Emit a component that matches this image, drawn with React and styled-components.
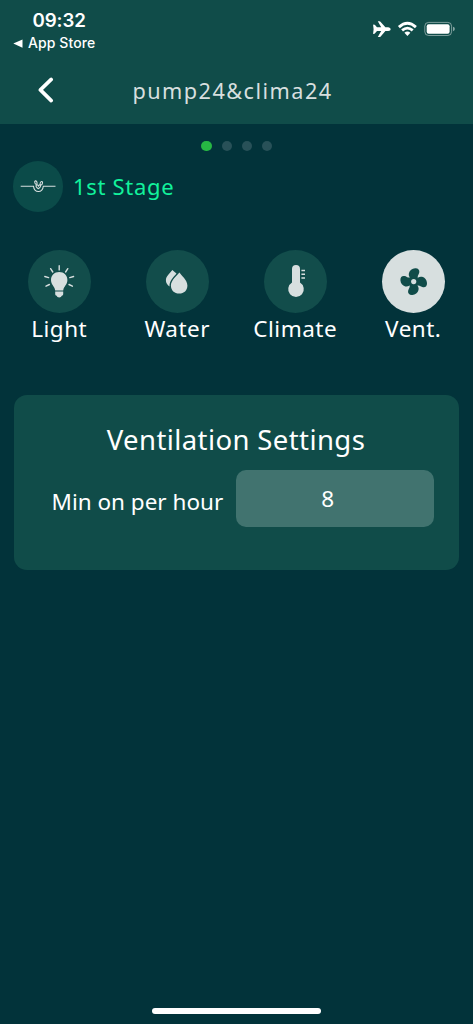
import React, { useState } from 'react';
import styled, { createGlobalStyle, ThemeProvider } from 'styled-components';

const theme = {
    colors: {
        background: '#02333a',
        surface: '#104c49',
        field: '#41736f',
        icon: '#d7dfdf',
        mint: '#12f29c',
        green: '#27b744',
        dot: '#285158'
    },
    fonts: {
        system: 'Inter, "Liberation Sans", sans-serif',
        body: '"Noto Sans", "Open Sans", sans-serif'
    }
};

const GlobalStyle = createGlobalStyle`
    * {
        box-sizing: border-box;
    }

    body {
        margin: 0;
        background-color: #02333a;
    }
`;

const Screen = styled.div`
    display: flex;
    flex-direction: column;
    width: 473px;
    height: 1024px;
    overflow: hidden;
    color: #fff;
    background-color: ${props => props.theme.colors.background};
    font-family: ${props => props.theme.fonts.body};
`;

const Header = styled.header`
    height: 123.6px;
    flex-shrink: 0;
    background-color: ${props => props.theme.colors.surface};
`;

const StatusBar = styled.div`
    display: flex;
    justify-content: space-between;
    height: 56px;
    padding: 9px 17px 0 13px;
    font-family: ${props => props.theme.fonts.system};
`;

const Time = styled.div`
    padding: 1px 0 0 19.5px;
    font-size: 18.7px;
    line-height: 21px;
    font-weight: 600;
    letter-spacing: -0.1px;
`;

const BackToApp = styled.div`
    display: flex;
    align-items: center;
    gap: 5px;
    margin-top: 3px;
    font-size: 14px;
    line-height: 18px;
    font-weight: 500;
    letter-spacing: 0.1px;
`;

const Indicators = styled.div`
    display: flex;
    align-items: flex-start;
    padding-top: 11px;
`;

const NavBar = styled.div`
    display: grid;
    grid-template-columns: 91px 1fr 99px;
    align-items: center;
    height: 67.6px;
`;

const BackButton = styled.button`
    display: flex;
    justify-content: center;
    padding: 0;
    border: 0;
    color: #fff;
    background: none;
`;

const Title = styled.h1`
    margin: 3px 0 0;
    color: ${props => props.theme.colors.icon};
    font-size: 21.7px;
    font-weight: 400;
    line-height: 30px;
    letter-spacing: 1.45px;
    text-align: center;
    white-space: nowrap;
`;

const Dots = styled.div`
    display: flex;
    justify-content: center;
    gap: 10px;
    padding: 17.4px 0 0 0.6px;
`;

const Dot = styled.span`
    width: 10.2px;
    height: 10.2px;
    border-radius: 50%;
    background-color: ${props => (props.$active ? props.theme.colors.green : props.theme.colors.dot)};
`;

const Stage = styled.div`
    display: flex;
    align-items: center;
    gap: 10px;
    margin-top: 10px;
    padding-left: 12.5px;
`;

const StageBadge = styled.div`
    width: 50.5px;
    height: 50.5px;
    border-radius: 50%;
    background-color: #0b4b49;

    svg {
        display: block;
    }
`;

const StageName = styled.h2`
    margin: 0;
    color: ${props => props.theme.colors.mint};
    font-size: 22px;
    font-weight: 400;
    line-height: 30px;
    letter-spacing: 0.7px;
`;

const Tabs = styled.nav`
    display: grid;
    grid-template-columns: repeat(4, 118px);
    margin-top: 38px;
`;

const Tab = styled.button`
    display: flex;
    flex-direction: column;
    align-items: center;
    padding: 0;
    border: 0;
    color: #fff;
    background: none;
    font-family: inherit;
`;

const TabIcon = styled.span`
    width: 63px;
    height: 63px;
    border-radius: 50%;
    color: ${props => (props.$active ? props.theme.colors.surface : props.theme.colors.icon)};
    background-color: ${props => (props.$active ? props.theme.colors.icon : '#124d4b')};

    svg {
        display: block;
    }
`;

const TabLabel = styled.span`
    margin-right: -0.5px;
    font-size: 22.5px;
    line-height: 31px;
    letter-spacing: 0.5px;
`;

const Card = styled.section`
    width: 444.7px;
    height: 175.4px;
    margin: 50.9px 0 0 14px;
    padding: 26px 25.2px 0 37.5px;
    border-radius: 13px;
    background-color: ${props => props.theme.colors.surface};
`;

const CardTitle = styled.h3`
    margin: 0 13px 0 0;
    font-size: 27.5px;
    font-weight: 400;
    line-height: 38px;
    letter-spacing: 0.4px;
    text-align: center;
    white-space: nowrap;
`;

const Field = styled.label`
    display: flex;
    align-items: center;
    justify-content: space-between;
    margin-top: 11.5px;
    font-size: 22.5px;
    white-space: nowrap;
`;

const FieldLabel = styled.span`
    padding-top: 6px;
`;

const FieldInput = styled.input`
    width: 197.5px;
    height: 56.7px;
    padding: 1px 14px 0 0;
    border: 0;
    border-radius: 10px;
    color: #fff;
    background-color: ${props => props.theme.colors.field};
    font-family: inherit;
    font-size: 22.5px;
    text-align: center;
    outline: none;
`;

const HomeIndicator = styled.div`
    width: 169px;
    height: 6.5px;
    margin: auto auto 10px;
    border-radius: 4px;
    background-color: #fff;
`;

const StatusIcons = () => (
    <svg width="84" height="18" viewBox="372 20 84 18" fill="#fff">
        <path d="M373.1 24.7 Q374.2 24 375 25.1 L377 27.3 L381.2 27.3 L377.8 21.3 L379.3 21.3 Q380.2 21.3 380.7 22 L385.4 27.3 L388.3 27.3 Q390.7 27.8 390.7 29.2 Q390.7 30.6 388.3 31.1 L385.4 31.1 L380.7 36.4 Q380.2 37.1 379.3 37.1 L377.8 37.1 L381.2 31.1 L377 31.1 L375 33.3 Q374.2 34.4 373.1 33.7 L373.6 29.2 Z" />
        <g fill="none" stroke="#fff" strokeWidth="2.8">
            <path d="M398.9 27.1 Q407.4 19.3 415.9 27.1" />
            <path d="M402.1 30.4 Q407.4 25.8 412.7 30.4" />
        </g>
        <path d="M404.4 32.7 Q407.4 30.3 410.4 32.7 L407.4 35.9 Z" />
        <rect x="424.8" y="22.4" width="26.8" height="13.1" rx="3.8" fill="none" stroke="#fff" strokeOpacity="0.45" />
        <rect x="426.7" y="24.2" width="22.9" height="9.5" rx="2" />
        <path d="M453 26.8 Q454.9 27.4 454.9 29 Q454.9 30.6 453 31.2 Z" fillOpacity="0.5" />
    </svg>
);

const ChevronIcon = () => (
    <svg width="18" height="26" viewBox="0 0 18 26" fill="none" stroke="currentColor" strokeWidth="3.6" strokeLinecap="round" strokeLinejoin="round">
        <path d="M14.2 2.4 L3.4 12.9 L14.2 23.6" />
    </svg>
);

const SproutIcon = () => (
    <svg width="50.5" height="50.5" viewBox="0 0 50.5 50.5" fill="none" stroke="#d7dfdf" strokeWidth="1.1">
        <path d="M7.7 25.2 H20.5 C20.9 28.7 22.8 30.5 25.4 30.5 C28 30.5 29.9 28.7 30.3 25.2 H42.5" />
        <path d="M25.3 27.7 C22.8 26.2 22.6 24.7 23.5 24 C24.4 23.3 25.1 24.3 25.4 25 C25.9 24 26.8 23.5 27.4 24.3 C28 25.2 27 26.9 25.3 27.7 Z" />
        <ellipse cx="22.9" cy="21.6" rx="1.1" ry="1.8" transform="rotate(-18 22.9 21.6)" />
        <ellipse cx="28.3" cy="22.3" rx="1.1" ry="1.8" transform="rotate(22 28.3 22.3)" />
    </svg>
);

const LightIcon = () => (
    <svg width="63" height="63" viewBox="0 0 63 63" fill="currentColor">
        <path d="M31.2 22.1 C26.4 22.1 23 25.6 23 30.1 C23 34.6 26.5 36.2 27.2 40.4 H35.2 C35.9 36.2 39.4 34.6 39.4 30.1 C39.4 25.6 36 22.1 31.2 22.1 Z" />
        <path d="M27.2 41.5 H35.2 V44.2 Q35.2 45.5 33.8 45.8 Q33.3 47.5 31.2 47.5 Q29.1 47.5 28.6 45.8 Q27.2 45.5 27.2 44.2 Z" />
        <path
            d="M31.2 15.7 V19.9 M22.6 18.7 L24.8 22 M39.8 18.7 L37.6 22 M16.8 26.5 L20.6 27.6 M45.6 26.5 L41.8 27.6 M18 36.2 L21.4 34.5 M44.4 36.2 L41 34.5"
            fill="none"
            stroke="currentColor"
            strokeWidth="1.4"
            strokeLinecap="round"
        />
    </svg>
);

const WaterIcon = () => (
    <svg width="63" height="63" viewBox="0 0 63 63" fill="currentColor">
        <path d="M33.3 22.6 C35.3 25.2 41.4 30.5 41.4 35.4 C41.4 40.2 38 43.6 33.2 43.6 C28.4 43.6 24.9 40.2 24.9 35.4 C24.9 30.5 31.2 25.4 33.3 22.6 Z" />
        <path d="M26.4 20.1 Q28.2 22 30.5 23.4 C27.4 27.2 23.3 30.4 23.5 36.4 C21.3 35.2 19.9 33 19.9 30.3 C19.9 26.4 24.2 23 26.4 20.1 Z" />
    </svg>
);

const ClimateIcon = () => (
    <svg width="63" height="63" viewBox="0 0 63 63" fill="currentColor">
        <path d="M28 19.1 A4 4 0 0 1 36 19.1 V32.5 A7.8 7.8 0 1 1 28 32.5 Z" />
        <path d="M37.4 20.5 H41 M37.4 24.3 H41 M37.4 28.1 H41" fill="none" stroke="currentColor" strokeWidth="1.5" />
    </svg>
);

const FanIcon = () => (
    <svg width="63" height="63" viewBox="-31.7 -31.6 63 63" fill="currentColor">
        {[0, 90, 180, 270].map(angle => (
            <path
                key={angle}
                transform={`rotate(${angle})`}
                d="M-2.2 -2.6 C-4.2 -3.8 -5.4 -6 -4.8 -8.4 C-4.1 -11.2 -1.6 -13.1 1.4 -13.3 C4.4 -13.5 6 -11.7 5.6 -9.3 C5.3 -7.4 4 -6.2 4 -4.6 L4.3 -2 L0 0 Z"
            />
        ))}
        <circle r="2.6" fill={theme.colors.icon} />
    </svg>
);

const tabs = [
    { id: 'light', label: 'Light', Icon: LightIcon },
    { id: 'water', label: 'Water', Icon: WaterIcon },
    { id: 'climate', label: 'Climate', Icon: ClimateIcon },
    { id: 'vent', label: 'Vent.', Icon: FanIcon }
];

function App() {
    const [current, setCurrent] = useState('vent');
    const [minutes, setMinutes] = useState('8');

    return (
        <ThemeProvider theme={theme}>
            <GlobalStyle />
            <Screen>
                <Header>
                    <StatusBar>
                        <div>
                            <Time>09:32</Time>
                            <BackToApp>
                                <svg width="10" height="9" viewBox="0 0 10 9" fill="#fff">
                                    <path d="M0.3 4.6 L9.5 0.5 V8.7 Z" />
                                </svg>
                                App Store
                            </BackToApp>
                        </div>
                        <Indicators>
                            <StatusIcons />
                        </Indicators>
                    </StatusBar>
                    <NavBar>
                        <BackButton aria-label="Back">
                            <ChevronIcon />
                        </BackButton>
                        <Title>pump24&amp;clima24</Title>
                    </NavBar>
                </Header>
                <Dots>
                    {[0, 1, 2, 3].map(page => (
                        <Dot key={page} $active={page === 0} />
                    ))}
                </Dots>
                <Stage>
                    <StageBadge>
                        <SproutIcon />
                    </StageBadge>
                    <StageName>1st Stage</StageName>
                </Stage>
                <Tabs>
                    {tabs.map(({ id, label, Icon }) => (
                        <Tab key={id} onClick={() => setCurrent(id)}>
                            <TabIcon $active={id === current}>
                                <Icon />
                            </TabIcon>
                            <TabLabel>{label}</TabLabel>
                        </Tab>
                    ))}
                </Tabs>
                <Card>
                    <CardTitle>Ventilation Settings</CardTitle>
                    <Field>
                        <FieldLabel>Min on per hour</FieldLabel>
                        <FieldInput value={minutes} onChange={e => setMinutes(e.target.value)} />
                    </Field>
                </Card>
                <HomeIndicator />
            </Screen>
        </ThemeProvider>
    );
}

export default App;
